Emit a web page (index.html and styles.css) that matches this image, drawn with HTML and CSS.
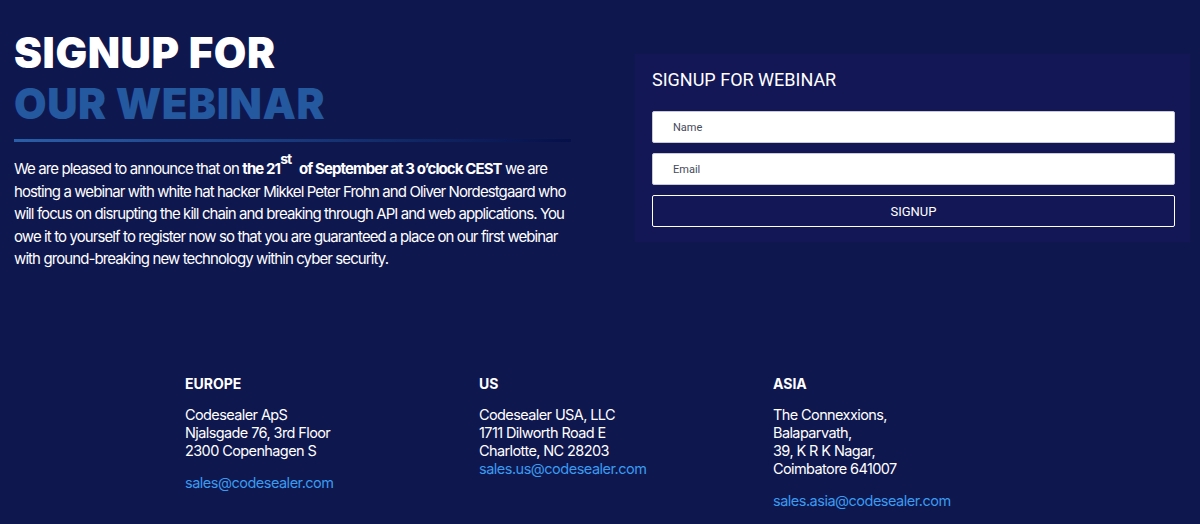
FILE: index.html
```html
<!DOCTYPE html>
<html>
<head>
<meta charset="utf-8">
<link rel="stylesheet" href="styles.css">
</head>
<body>
<main class="page">
  <section class="hero">
    <div class="intro">
      <h1 class="title"><span class="t-white">SIGNUP FOR</span><span class="t-blue">OUR WEBINAR</span></h1>
      <div class="rule"></div>
      <p class="lead">We are pleased to announce that on <strong>the 21<sup>st</sup> of September at 3 o’clock CEST</strong> we are hosting a webinar with white hat hacker Mikkel Peter Frohn and Oliver Nordestgaard who will focus on disrupting the kill chain and breaking through API and web applications. You owe it to yourself to register now so that you are guaranteed a place on our first webinar with ground-breaking new technology within cyber security.</p>
    </div>
    <form class="card">
      <h2 class="card-title">SIGNUP FOR WEBINAR</h2>
      <input class="field" type="text" placeholder="Name">
      <input class="field" type="email" placeholder="Email">
      <button class="btn" type="button">SIGNUP</button>
    </form>
  </section>
  <footer class="offices">
    <div class="office">
      <h3 class="office-name">EUROPE</h3>
      <p class="addr">Codesealer ApS<br>Njalsgade 76, 3rd Floor<br>2300 Copenhagen S</p>
      <a class="mail gap" href="#">sales@codesealer.com</a>
    </div>
    <div class="office">
      <h3 class="office-name">US</h3>
      <p class="addr">Codesealer USA, LLC<br>1711 Dilworth Road E<br>Charlotte, NC 28203</p>
      <a class="mail" href="#">sales.us@codesealer.com</a>
    </div>
    <div class="office">
      <h3 class="office-name">ASIA</h3>
      <p class="addr">The Connexxions,<br>Balaparvath,<br>39, K R K Nagar,<br>Coimbatore 641007</p>
      <a class="mail gap" href="#">sales.asia@codesealer.com</a>
    </div>
  </footer>
</main>
</body>
</html>
```
FILE: styles.css
```css
* { box-sizing: border-box; }
html, body { margin: 0; padding: 0; }
body {
  background: #0f174f;
  color: #ffffff;
  font-family: Inter, "Noto Sans", sans-serif;
  width: 1200px;
  height: 524px;
  overflow: hidden;
}
.page { display: flex; flex-direction: column; }
.hero {
  display: flex;
  align-items: flex-start;
  padding: 27px 10px 0 14px;
}
.intro { width: 557px; }
.title {
  margin: 0;
  font-size: 42px;
  line-height: 51px;
  font-weight: 900;
  letter-spacing: 0.6px;
  display: flex;
  flex-direction: column;
}
.t-white { color: #ffffff; }
.t-blue { color: #2459a0; }
.rule {
  margin-top: 10px;
  height: 3px;
  width: 557px;
  background: linear-gradient(90deg, #2a5ea8 0%, #1a3d80 45%, #061049 100%);
}
.lead {
  margin: 16px 0 0 0;
  font-size: 15px;
  line-height: 22.5px;
  letter-spacing: -0.9px;
  color: #ffffff;
}
.lead strong { font-weight: 700; }
.lead sup {
  font-size: 14px;
  line-height: 0;
  vertical-align: 0.75em;
  margin-right: 5px;
}
.card {
  margin: 27px 0 0 64px;
  width: 555px;
  background: #141755;
  padding: 15px 15px 15px 17px;
  display: flex;
  flex-direction: column;
  gap: 10px;
  font-family: Roboto, "Liberation Sans", sans-serif;
}
.card-title {
  margin: 0 0 10px 0;
  font-size: 18px;
  line-height: 22px;
  font-weight: 400;
  color: #ffffff;
}
.field {
  height: 32px;
  border: 1px solid #c9c9d6;
  border-radius: 2px;
  background: #ffffff;
  padding: 0 20px;
  font-family: Roboto, "Liberation Sans", sans-serif;
  font-size: 11px;
  color: #222;
  outline: none;
}
.field::placeholder { color: #444a5a; }
.btn {
  height: 32px;
  border: 1px solid #ffffff;
  border-radius: 2px;
  background: transparent;
  color: #ffffff;
  font-family: Roboto, "Liberation Sans", sans-serif;
  font-size: 13px;
  cursor: pointer;
}
.offices {
  display: grid;
  grid-template-columns: 294px 294px 294px;
  padding: 104px 0 0 185px;
}
.office { display: flex; flex-direction: column; align-items: flex-start; }
.office-name {
  margin: 0 0 13px 0;
  font-size: 14px;
  line-height: 18px;
  font-weight: 700;
}
.addr {
  margin: 0;
  font-size: 14.5px;
  line-height: 18px;
  letter-spacing: -0.6px;
}
.mail {
  color: #3a9bf0;
  text-decoration: none;
  font-size: 14.5px;
  line-height: 18px;
  letter-spacing: -0.5px;
}
.mail.gap { margin-top: 14px; }
```
